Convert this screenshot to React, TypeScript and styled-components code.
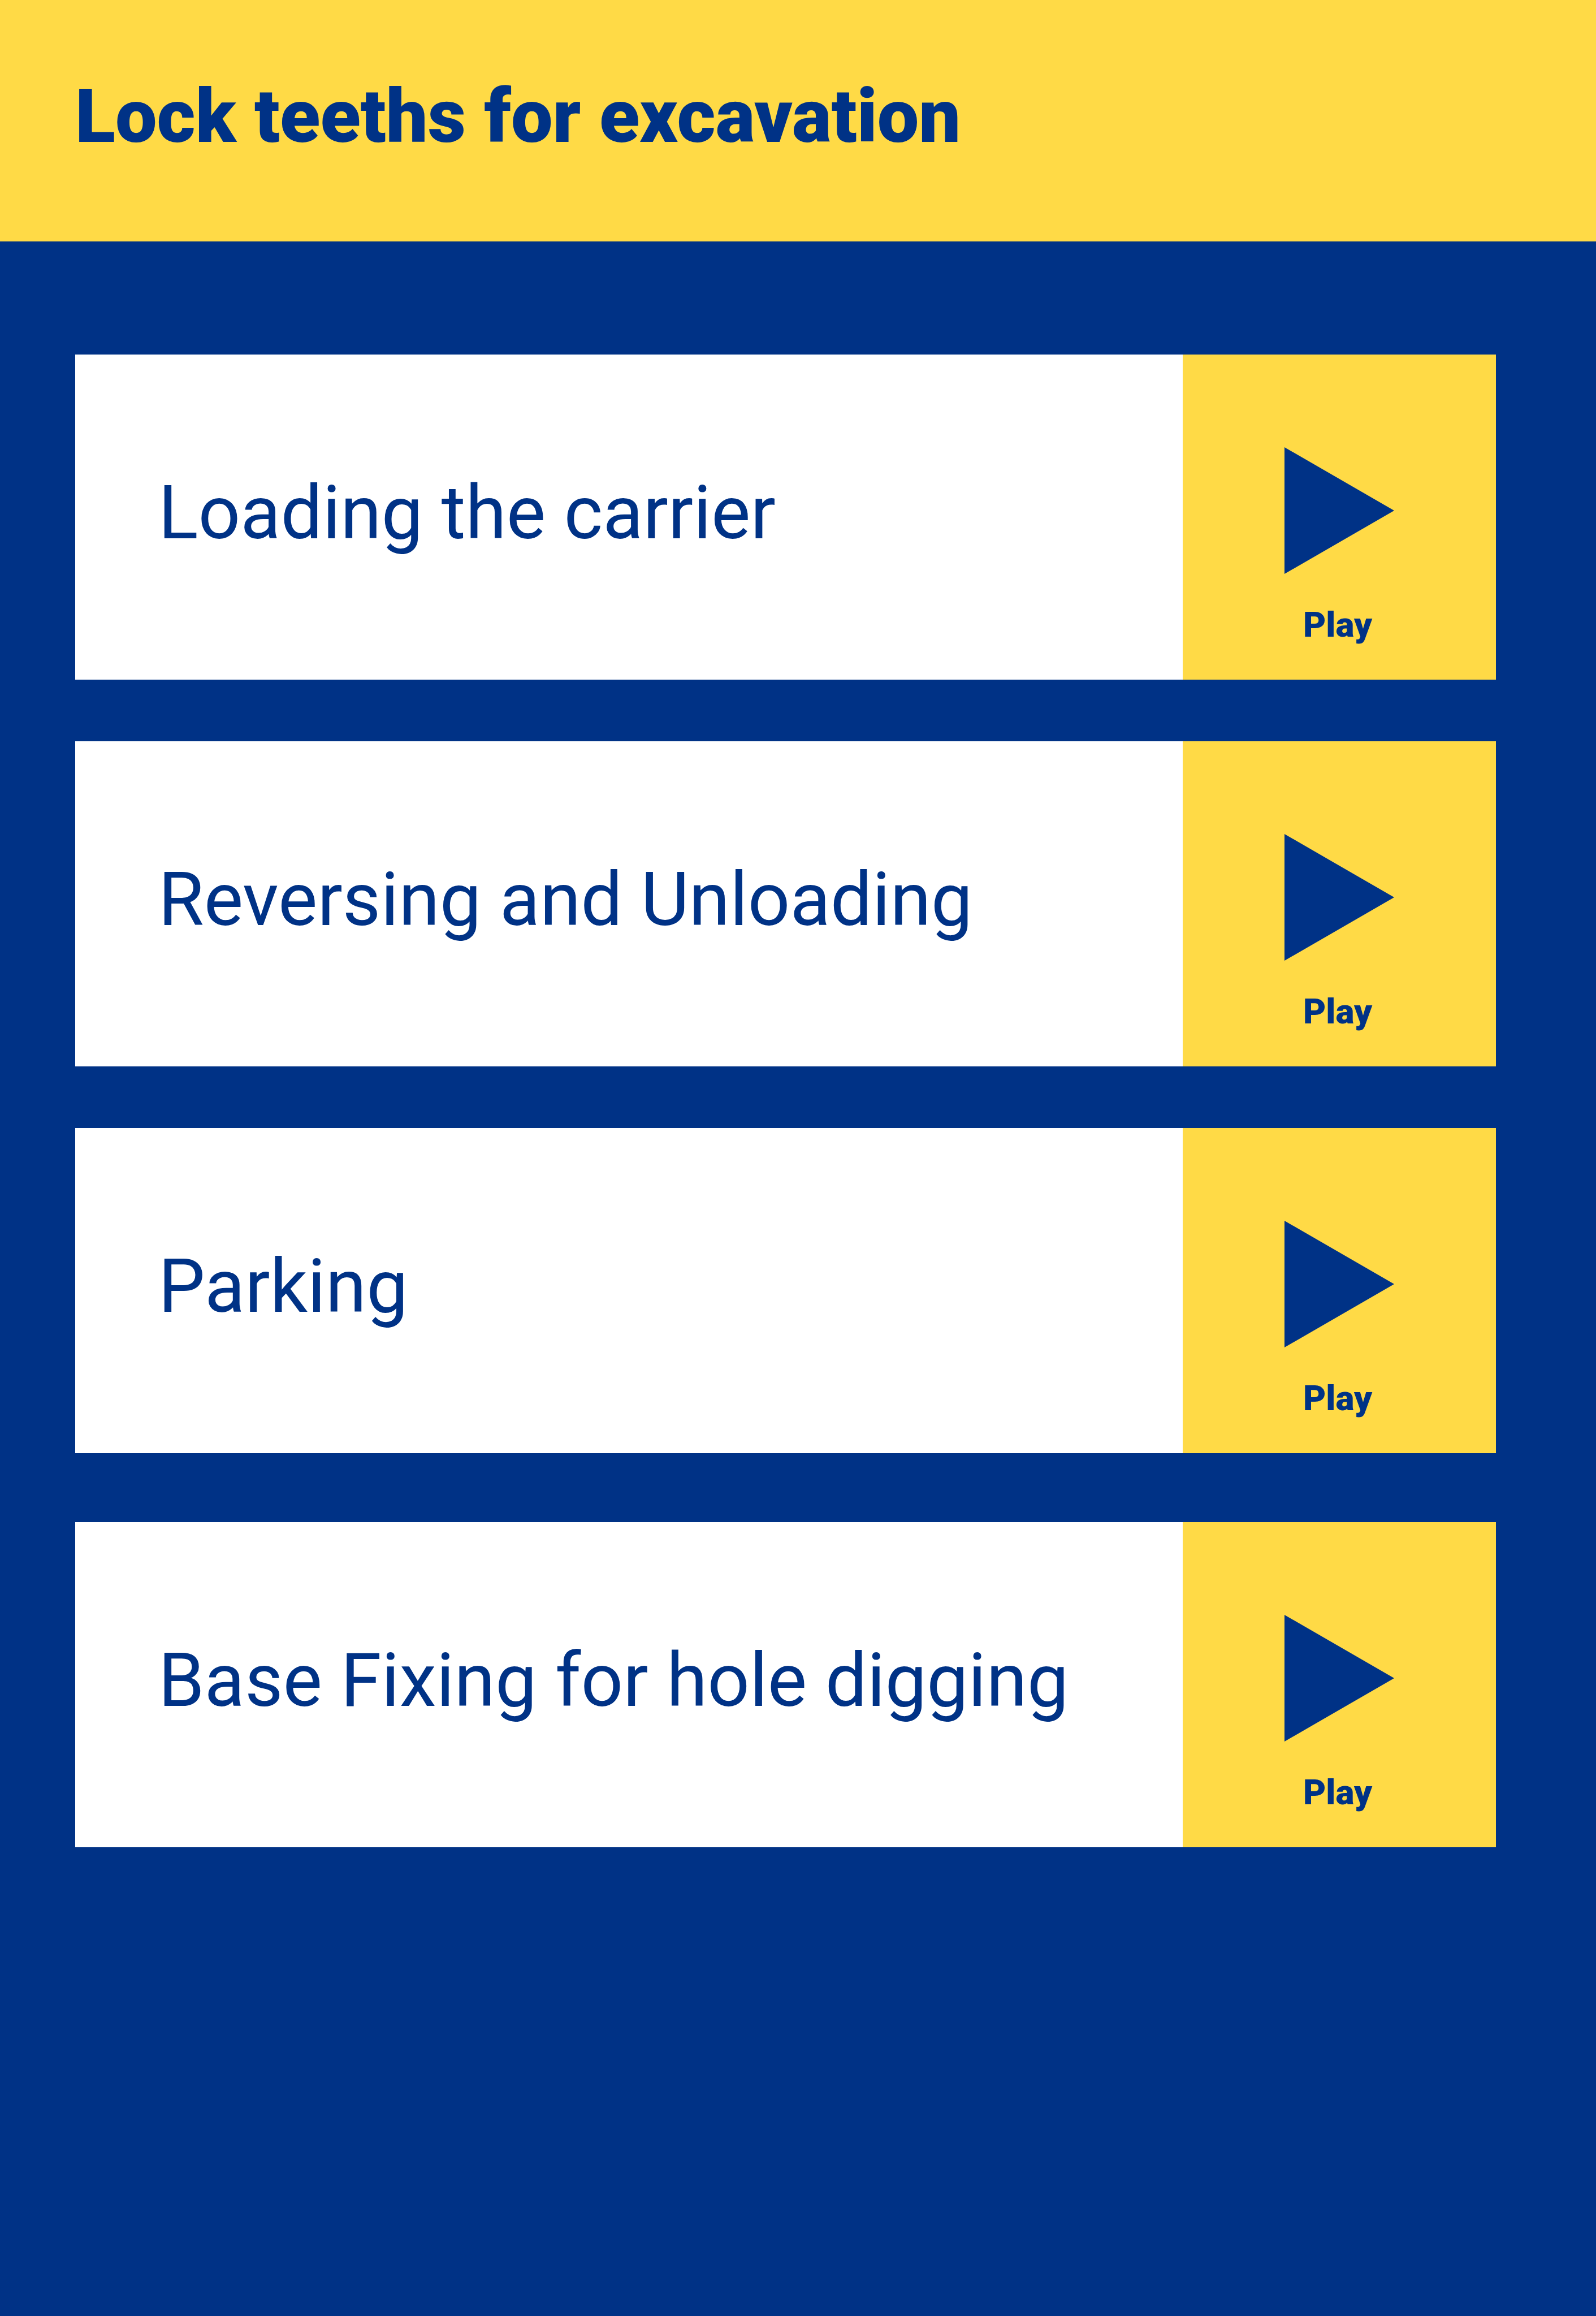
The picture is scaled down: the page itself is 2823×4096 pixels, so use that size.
import React from "react";
import styled, { createGlobalStyle } from "styled-components";

const blue = "#003286";
const yellow = "#ffda46";

const GlobalStyle = createGlobalStyle`
  *, *::before, *::after {
    box-sizing: border-box;
  }
  body {
    margin: 0;
    background: ${blue};
    color: ${blue};
    font-family: Roboto, "Liberation Sans", sans-serif;
  }
`;

const Page = styled.div`
  min-height: 100vh;
  background: ${blue};
`;

const Header = styled.header`
  padding: 128px 133px 143px;
  background: ${yellow};
`;

const Title = styled.h1`
  margin: 0;
  font-size: 131px;
  line-height: 156px;
  font-weight: 900;
`;

const Lessons = styled.ul`
  display: flex;
  flex-direction: column;
  gap: 109px;
  margin: 0;
  padding: 200px 177px 200px 133px;
  list-style: none;
`;

const Lesson = styled.li<{ $spaced?: boolean }>`
  display: flex;
  min-height: 575px;
  margin-top: ${(p) => (p.$spaced ? "13px" : "0")};
  background: #ffffff;
`;

const LessonName = styled.h2`
  flex: 1;
  align-self: center;
  min-width: 0;
  margin: 0;
  padding: 0 20px 16px 147px;
  font-size: 131px;
  line-height: 156px;
  font-weight: 400;
`;

const PlayButton = styled.button`
  display: flex;
  flex: 0 0 554px;
  flex-direction: column;
  align-items: center;
  justify-content: flex-end;
  gap: 54px;
  padding: 0 0 61px;
  border: 0;
  background: ${yellow};
  color: ${blue};
  font-family: inherit;
  font-size: 62px;
  line-height: 72px;
  font-weight: 900;
  cursor: pointer;
`;

const PlayIcon = styled.svg`
  display: block;
  width: 194px;
  height: 224px;
  fill: currentColor;
`;

const PlayLabel = styled.span`
  padding-right: 6px;
`;

const lessons = [
  { name: "Loading the carrier" },
  { name: "Reversing and Unloading" },
  { name: "Parking" },
  { name: "Base Fixing for hole digging", spaced: true },
];

export default function App() {
  return (
    <Page>
      <GlobalStyle />
      <Header>
        <Title>Lock teeths for excavation</Title>
      </Header>
      <main>
        <Lessons>
          {lessons.map((lesson) => (
            <Lesson key={lesson.name} $spaced={lesson.spaced}>
              <LessonName>{lesson.name}</LessonName>
              <PlayButton type="button">
                <PlayIcon viewBox="0 0 194 224" aria-hidden="true">
                  <path d="M0 0L194 112L0 224Z" />
                </PlayIcon>
                <PlayLabel>Play</PlayLabel>
              </PlayButton>
            </Lesson>
          ))}
        </Lessons>
      </main>
    </Page>
  );
}
